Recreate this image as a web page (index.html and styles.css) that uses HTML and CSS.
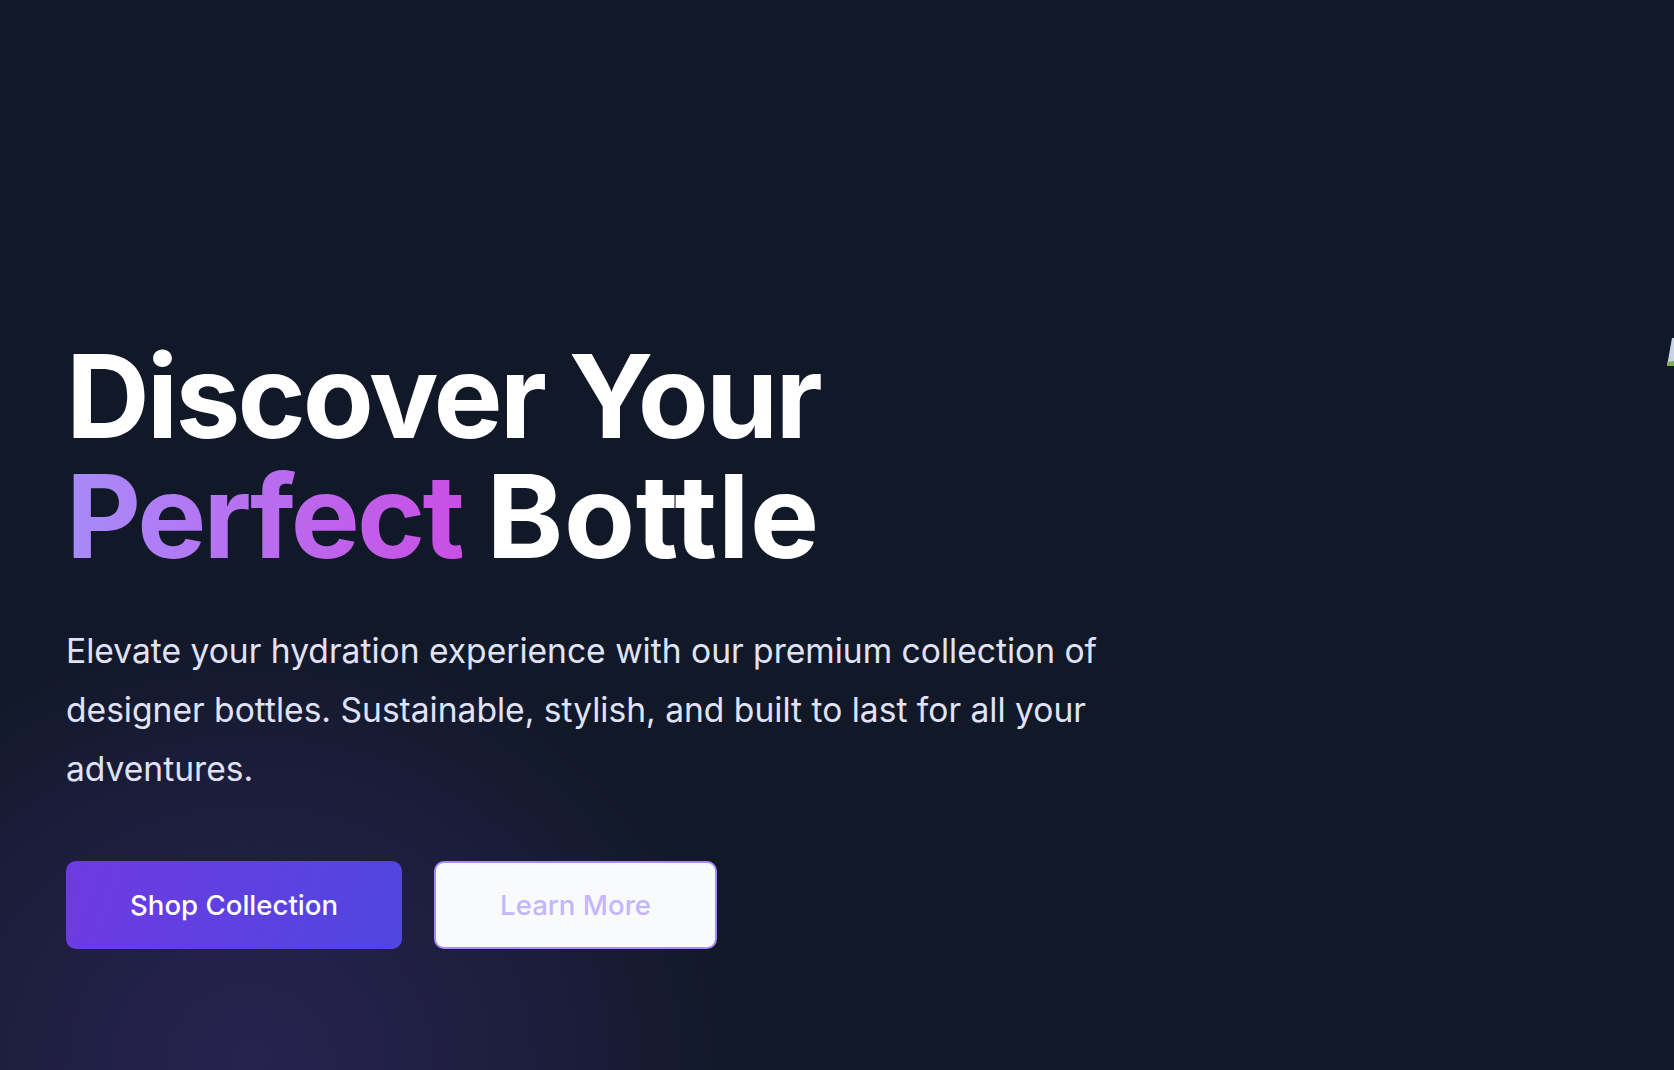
FILE: index.html
```html
<!DOCTYPE html>
<html lang="en">
<head>
<meta charset="utf-8">
<title>Discover Your Perfect Bottle</title>
<link rel="stylesheet" href="styles.css">
</head>
<body>
<section class="hero">
  <div class="glow"></div>
  <div class="hero-content">
    <h1 class="title">Discover Your<br><span class="accent">Perfect</span> <span class="word">Bottle</span></h1>
    <p class="lead">Elevate your hydration experience with our premium collection of designer bottles. Sustainable, stylish, and built to last for all your adventures.</p>
    <div class="actions">
      <a class="btn btn-primary" href="#">Shop Collection</a>
      <a class="btn btn-outline" href="#">Learn More</a>
    </div>
  </div>
  <svg class="peek" width="8" height="30" viewBox="0 0 8 30">
    <polygon points="6,0 8,0 8,28 1,28" fill="#c9d3e6"/>
    <polygon points="1,24 8,23 8,28 1,28" fill="#7fb04a"/>
  </svg>
</section>
</body>
</html>
```

FILE: styles.css
```css
* { box-sizing: border-box; }
html, body { margin: 0; padding: 0; }
body {
  background: #111827;
  font-family: Inter, "Noto Sans", "Liberation Sans", sans-serif;
  color: #ffffff;
}
.hero {
  position: relative;
  overflow: hidden;
  min-height: 1070px;
  display: flex;
  align-items: center;
  padding: 215px 0 0 66px;
}
.glow {
  position: absolute;
  left: -250px;
  bottom: -440px;
  width: 1000px;
  height: 900px;
  border-radius: 50%;
  background: radial-gradient(closest-side, rgba(60, 45, 120, 0.5), rgba(60, 45, 120, 0.28) 55%, rgba(17, 24, 39, 0) 100%);
  pointer-events: none;
}
.hero-content {
  position: relative;
}
.title {
  margin: 0;
  font-size: 116px;
  line-height: 120px;
  font-weight: 700;
  letter-spacing: -0.025em;
  color: #ffffff;
}
.word {
  letter-spacing: 0.005em;
}
.accent {
  background: linear-gradient(to right, #a78bfa, #c94fe4);
  -webkit-background-clip: text;
  background-clip: text;
  color: transparent;
}
.lead {
  margin: 46px 0 0;
  max-width: 1100px;
  font-size: 33.6px;
  line-height: 58.8px;
  font-weight: 400;
  color: #e0e3f8;
}
.actions {
  display: flex;
  gap: 32px;
  margin-top: 62px;
}
.btn {
  display: inline-block;
  font-size: 27.6px;
  line-height: 40px;
  font-weight: 500;
  text-decoration: none;
  border-radius: 10px;
}
.btn-primary {
  padding: 24px 64px;
  color: #ffffff;
  background: linear-gradient(110deg, #6f3ae2, #4f46e0);
}
.btn-outline {
  padding: 22px 64px;
  color: #c4b5fd;
  background: #f8fafc;
  border: 2px solid #a78bfa;
}
.peek {
  position: absolute;
  right: 0;
  top: 338px;
}
```
